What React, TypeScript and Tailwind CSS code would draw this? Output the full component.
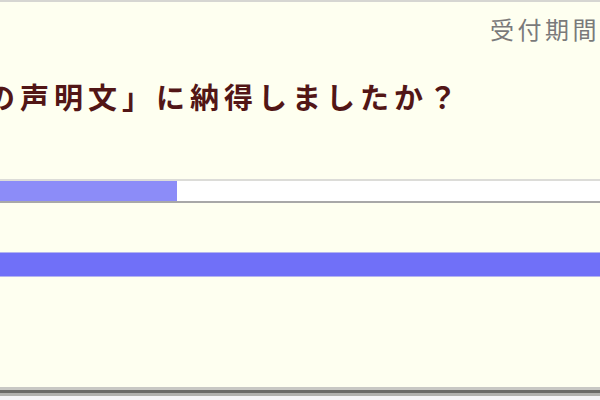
import React from 'react';

const jp = { fontFamily: '"Noto Sans CJK JP", "Noto Sans", sans-serif' };

// Poll result block: header, question, two result bars
export default function App() {
    return (
        <div className="w-[600px] h-[400px] overflow-hidden bg-[#fefff0] flex flex-col" style={jp}>
            {/* top edge of the panel */}
            <div className="h-[2px] bg-[#d6d6d2]" />

            <div className="flex justify-end pr-[0px] pt-[12px] h-[48px]">
                <span className="text-[24px] leading-[30px] text-[#7a7a7a] tracking-[3.5px]">受付期間</span>
            </div>

            <div className="-ml-[14px] mt-[27px] h-[38px] whitespace-nowrap">
                <h2 className="text-[29px] leading-[38px] font-bold text-[#521616] tracking-[5px]">
                    の声明文」に納得しましたか？
                </h2>
            </div>

            {/* partial result bar */}
            <div className="mt-[64px] h-[24px] border-t-2 border-[#dcdcd8] border-b-2 border-b-[#a8a8a8] bg-white flex">
                <div className="w-[177px] bg-[#8c8cf8]" />
            </div>

            {/* full result bar */}
            <div className="mt-[49px] h-[25px] border-y border-[#b4b4f0] bg-[#7070f8]" />

            <div className="flex-1" />

            {/* bottom shadow line */}
            <div className="h-[3px] bg-[#c8c8c4]" />
            <div className="h-[3px] bg-[#6a6a68]" />
            <div className="h-[3px] bg-[#b0b0ae]" />
            <div className="h-[4px] bg-[#f4f4f8]" />
        </div>
    );
}
